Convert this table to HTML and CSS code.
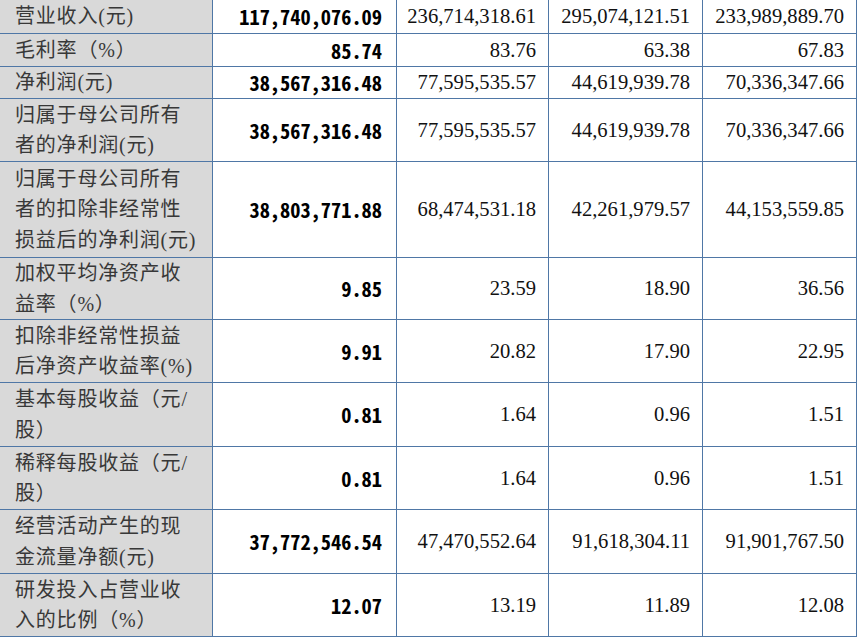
FILE: index.html
```html
<!DOCTYPE html>
<html lang="zh-CN">
<head>
<meta charset="utf-8">
<title>主要财务数据</title>
<link rel="stylesheet" href="styles.css">
</head>
<body>
<table class="fin">
  <colgroup>
    <col class="c-label">
    <col class="c-main">
    <col class="c-y1">
    <col class="c-y2">
    <col class="c-y3">
  </colgroup>
  <tbody>
    <tr class="r-a">
      <th>营业收入(元)</th>
      <td class="bold">117,740,076.09</td>
      <td>236,714,318.61</td>
      <td>295,074,121.51</td>
      <td>233,989,889.70</td>
    </tr>
    <tr class="r-b">
      <th>毛利率（%）</th>
      <td class="bold">85.74</td>
      <td>83.76</td>
      <td>63.38</td>
      <td>67.83</td>
    </tr>
    <tr class="r-c">
      <th>净利润(元)</th>
      <td class="bold">38,567,316.48</td>
      <td>77,595,535.57</td>
      <td>44,619,939.78</td>
      <td>70,336,347.66</td>
    </tr>
    <tr class="r-2">
      <th>归属于母公司所有<br>者的净利润(元)</th>
      <td class="bold">38,567,316.48</td>
      <td>77,595,535.57</td>
      <td>44,619,939.78</td>
      <td>70,336,347.66</td>
    </tr>
    <tr class="r-3">
      <th>归属于母公司所有<br>者的扣除非经常性<br>损益后的净利润(元)</th>
      <td class="bold">38,803,771.88</td>
      <td>68,474,531.18</td>
      <td>42,261,979.57</td>
      <td>44,153,559.85</td>
    </tr>
    <tr class="r-2s">
      <th>加权平均净资产收<br>益率（%）</th>
      <td class="bold">9.85</td>
      <td>23.59</td>
      <td>18.90</td>
      <td>36.56</td>
    </tr>
    <tr class="r-2">
      <th>扣除非经常性损益<br>后净资产收益率(%)</th>
      <td class="bold">9.91</td>
      <td>20.82</td>
      <td>17.90</td>
      <td>22.95</td>
    </tr>
    <tr class="r-2l">
      <th>基本每股收益（元/<br>股）</th>
      <td class="bold">0.81</td>
      <td>1.64</td>
      <td>0.96</td>
      <td>1.51</td>
    </tr>
    <tr class="r-2">
      <th>稀释每股收益（元/<br>股）</th>
      <td class="bold">0.81</td>
      <td>1.64</td>
      <td>0.96</td>
      <td>1.51</td>
    </tr>
    <tr class="r-2l">
      <th>经营活动产生的现<br>金流量净额(元)</th>
      <td class="bold">37,772,546.54</td>
      <td>47,470,552.64</td>
      <td>91,618,304.11</td>
      <td>91,901,767.50</td>
    </tr>
    <tr class="r-2">
      <th>研发投入占营业收<br>入的比例（%）</th>
      <td class="bold">12.07</td>
      <td>13.19</td>
      <td>11.89</td>
      <td>12.08</td>
    </tr>
  </tbody>
</table>
</body>
</html>
```

FILE: styles.css
```css
html, body {
  margin: 0;
  padding: 0;
  background: #ffffff;
}

.fin {
  border-collapse: collapse;
  table-layout: fixed;
  margin: -1px 0 0 -1px;
}

.c-label { width: 213px; }
.c-main  { width: 184px; }
.c-y1    { width: 152px; }
.c-y2    { width: 154px; }
.c-y3    { width: 154px; }

.r-a  { height: 34px; }
.r-b  { height: 33px; }
.r-c  { height: 32px; }
.r-2s { height: 62px; }
.r-2  { height: 63px; }
.r-2l { height: 64px; }
.r-3  { height: 96px; }

.fin th,
.fin td {
  border: 1px solid #4f77a6;
  padding: 0;
  line-height: 29px;
  vertical-align: middle;
  white-space: nowrap;
}

.fin th {
  background: #d9d9d9;
  text-align: left;
  font-weight: normal;
  font-family: "Liberation Serif", "Noto Sans CJK SC", serif;
  font-size: 20px;
  line-height: 30.5px;
  letter-spacing: 0.8px;
  color: #383838;
  padding-left: 15px;
}

.fin td {
  text-align: right;
  font-family: "Liberation Serif", serif;
  font-size: 20.6px;
  color: #111111;
  padding-right: 12px;
}

.fin td.bold {
  font-family: "Noto Sans Mono CJK SC", "DejaVu Sans Mono", monospace;
  font-weight: bold;
  font-size: 20.4px;
  color: #000000;
  padding-right: 14px;
}
```
